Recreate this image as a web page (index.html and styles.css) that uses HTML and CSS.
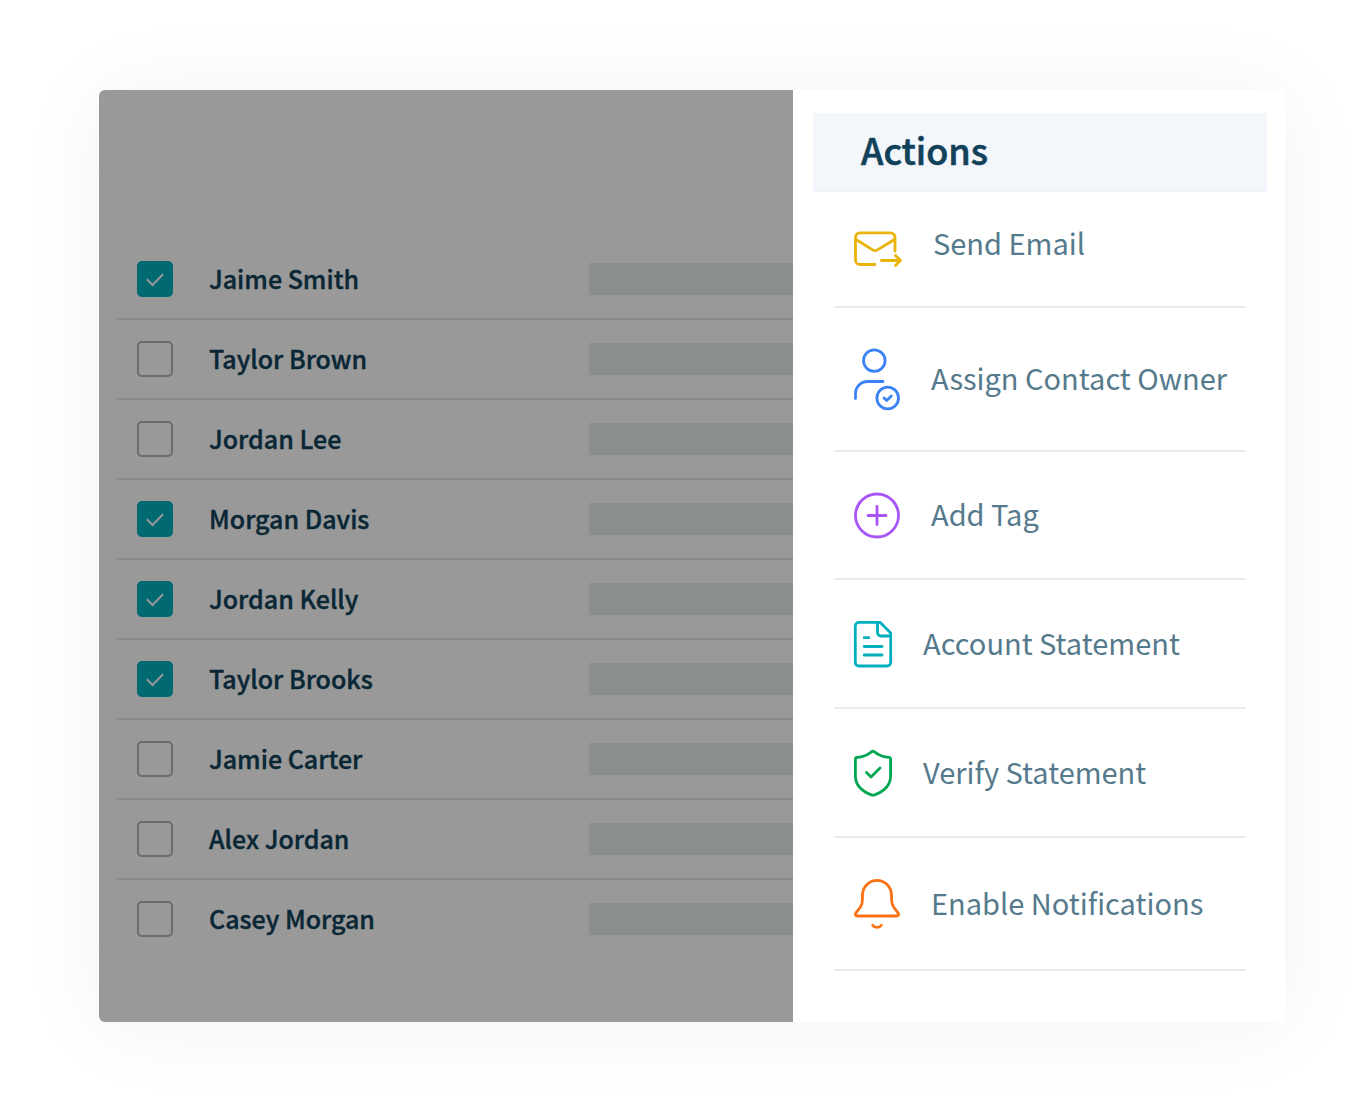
FILE: index.html
```
<!DOCTYPE html>
<html lang="en">
<head>
    <meta charset="UTF-8">
    <meta name="viewport" content="width=device-width, initial-scale=1.0">
    <title>Contacts - Actions</title>
    <link rel="stylesheet" href="styles.css">
</head>
<body>

<main class="card">
    <section class="contacts">
        <ul class="contact-list">
            <li><label><input type="checkbox" checked><span class="name">Jaime Smith</span></label><span class="bar"></span></li>
            <li><label><input type="checkbox"><span class="name">Taylor Brown</span></label><span class="bar"></span></li>
            <li><label><input type="checkbox"><span class="name">Jordan Lee</span></label><span class="bar"></span></li>
            <li><label><input type="checkbox" checked><span class="name">Morgan Davis</span></label><span class="bar"></span></li>
            <li><label><input type="checkbox" checked><span class="name">Jordan Kelly</span></label><span class="bar"></span></li>
            <li><label><input type="checkbox" checked><span class="name">Taylor Brooks</span></label><span class="bar"></span></li>
            <li><label><input type="checkbox"><span class="name">Jamie Carter</span></label><span class="bar"></span></li>
            <li><label><input type="checkbox"><span class="name">Alex Jordan</span></label><span class="bar"></span></li>
            <li><label><input type="checkbox"><span class="name">Casey Morgan</span></label><span class="bar"></span></li>
        </ul>
    </section>

    <aside class="actions">
        <h1>Actions</h1>
        <ul class="action-list">
            <li>
                <button type="button" class="mail">
                    <svg width="48" height="44" viewBox="0 -10 48 44">
                        <path d="M21 32.5H6a4.500 4.500 0 0 1-4.500-4.500V5A4.500 4.500 0 0 1 6 .8h30.500A4.500 4.500 0 0 1 41 5.300V19M2 7.500l17 10.600q2 1.200 4 0L40.500 7.500M27.500 28.500H46.500M41.500 23.500l5 5-5 5"/>
                    </svg>
                    <span>Send Email</span>
                </button>
            </li>
            <li>
                <button type="button" class="user">
                    <svg width="46" height="62" viewBox="0 0 46 62">
                        <circle cx="20.300" cy="12.600" r="10.800"/>
                        <path d="M1.500 50.500v-5a12 12 0 0 1 12-12H29M30 50l2.700 2.600 4.600-4.600"/>
                        <circle cx="33.700" cy="50" r="10.800"/>
                    </svg>
                    <span>Assign Contact Owner</span>
                </button>
            </li>
            <li>
                <button type="button" class="tag">
                    <svg width="46" height="46" viewBox="0 0 46 46">
                        <circle cx="23" cy="23.500" r="21.500"/>
                        <path d="M23 14.500v18M14 23.500h18"/>
                    </svg>
                    <span>Add Tag</span>
                </button>
            </li>
            <li>
                <button type="button" class="statement">
                    <svg width="38" height="47" viewBox="0 0 38 47">
                        <path d="M26 2.300H5a3.700 3.700 0 0 0-3.700 3.700v36.300A3.700 3.700 0 0 0 5 46h28a3.700 3.700 0 0 0 3.700-3.700V13zM23.500 2.500v10a3.500 3.500 0 0 0 3.500 3.500h9.500M10.200 17.700h4.500M10.200 26.500H28M10.200 35H28"/>
                    </svg>
                    <span>Account Statement</span>
                </button>
            </li>
            <li>
                <button type="button" class="verify">
                    <svg width="38" height="47" viewBox="0 0 38 47">
                        <path d="M17.500 2.800q1.500-1.100 3 0Q26.500 7.800 35 8.300q1.600.2 1.600 1.900V27c0 9.500-7 15.500-16 18.900q-1.600.6-3.200 0C8.500 42.500 1.400 36.500 1.400 27V10.200q0-1.700 1.600-1.900Q11.500 7.800 17.500 2.800zM12.500 23.500l4.500 4.500 9-9"/>
                    </svg>
                    <span>Verify Statement</span>
                </button>
            </li>
            <li>
                <button type="button" class="notify">
                    <svg width="46" height="51" viewBox="0 0 46 51">
                        <path d="M23 2.300A14.700 14.700 0 0 0 8.500 17C8.500 25.500 8 28 3.200 33.300 0 36.800 1.500 38 4 38h38c2.500 0 4-1.200.8-4.700C38 28 37.500 25.500 37.500 17A14.700 14.700 0 0 0 23 2.300zM18.700 47.200c2 3 6.600 3 8.600 0"/>
                    </svg>
                    <span>Enable Notifications</span>
                </button>
            </li>
        </ul>
    </aside>
</main>

</body>
</html>
```
FILE: styles.css
```
* {
    box-sizing: border-box;
}
body {
    margin: 0;
    padding: 90px 82px 90px 99px;
    background: #fff;
    font-family: "Noto Sans CJK SC", "Noto Sans", sans-serif;
}
ul {
    list-style: none;
    margin: 0;
    padding: 0;
}
.card {
    display: grid;
    grid-template-columns: 694fr 492fr;
    border-radius: 6px 0 0 6px;
    box-shadow: 0 4px 90px rgba(0, 0, 0, 0.06);
}

/* contact list, dimmed while the actions panel is open */
.contacts {
    position: relative;
    padding: 150px 0 62px 18px;
    background: #fff;
    border-radius: 6px 0 0 6px;
    overflow: hidden;
}
.contacts::after {
    content: "";
    position: absolute;
    inset: 0;
    background: rgba(0, 0, 0, 0.4);
}
.contact-list li {
    display: flex;
    align-items: center;
    height: 80px;
    padding-left: 20px;
    border-bottom: 2px solid #e4e4e4;
}
.contact-list li:last-child {
    border-bottom-color: transparent;
}
.contact-list label {
    display: flex;
    align-items: center;
    gap: 36px;
    width: 452px;
}
.contact-list input {
    appearance: none;
    display: flex;
    justify-content: center;
    align-items: center;
    width: 36px;
    height: 36px;
    margin: 0;
    border: 2px solid #b4b4b4;
    border-radius: 5px;
}
.contact-list input:checked {
    background: #00b0be;
    border-color: #00b0be;
}
.contact-list input:checked::after {
    content: "";
    width: 14px;
    height: 7px;
    margin-bottom: 4px;
    border: solid #fff;
    border-width: 0 0 2px 2px;
    transform: rotate(-45deg);
}
.name {
    padding-bottom: 2px;
    font-size: 25px;
    font-weight: 500;
    line-height: 32px;
    color: #12425a;
    -webkit-text-stroke: 0.4px;
}
.bar {
    flex: 1;
    height: 32px;
    background: #e6edec;
}

.actions {
    padding: 23px 18px 51px 20px;
    background: #fff;
}
.actions h1 {
    margin: 0;
    padding: 12px 48px 17px;
    border-bottom: 2px solid #edf3fb;
    background: #f3f7fc;
    font-size: 36px;
    font-weight: 500;
    line-height: 48px;
    color: #12425a;
    -webkit-text-stroke: 0.6px;
}
.action-list {
    margin: 0 21px;
}
.action-list li {
    border-bottom: 2px solid #ebebeb;
}
.action-list button {
    display: flex;
    align-items: center;
    gap: 31px;
    width: 100%;
    padding: 40px 0 40px 20px;
    border: none;
    background: none;
    font-family: inherit;
    font-size: 29px;
    line-height: 32px;
    color: #557a8c;
    white-space: nowrap;
    cursor: pointer;
}
.action-list .mail {
    padding-top: 30px;
}
.action-list span {
    padding-bottom: 4px;
}
.action-list svg {
    flex: none;
    overflow: visible;
    fill: none;
    stroke: currentColor;
    stroke-width: 2.8;
    stroke-linecap: round;
    stroke-linejoin: round;
}
.mail svg {
    color: #eab308;
}
.user svg {
    color: #3b82f6;
}
.tag svg {
    color: #a855f7;
}
.statement svg {
    color: #00b0be;
}
.verify svg {
    color: #00a651;
}
.notify svg {
    color: #f97316;
}
```
